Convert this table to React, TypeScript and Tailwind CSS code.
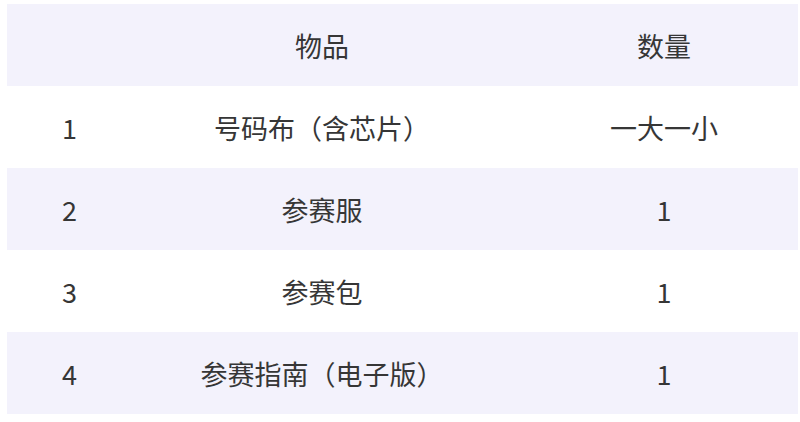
const rows = [
  { no: "1", item: "号码布（含芯片）", qty: "一大一小" },
  { no: "2", item: "参赛服", qty: "1" },
  { no: "3", item: "参赛包", qty: "1" },
  { no: "4", item: "参赛指南（电子版）", qty: "1" },
];

export default function App() {
  return (
    <div className="w-[800px] h-[422px] bg-white pt-[4px] pl-[7px] pr-[2px] font-['Noto_Sans_CJK_SC','Noto_Sans',sans-serif] text-[27px] leading-none text-[#363636]">
      <div className="grid grid-cols-[107px_416px_268px] h-[82px] items-center bg-[#f3f2fc]">
        <div />
        <div className="text-center">物品</div>
        <div className="text-center">数量</div>
      </div>
      {rows.map((r, i) => (
        <div
          key={r.no}
          className={
            "grid grid-cols-[107px_416px_268px] h-[82px] items-center " +
            (i % 2 === 0 ? "bg-white" : "bg-[#f3f2fc]")
          }
        >
          <div className="pl-[55px]">{r.no}</div>
          <div className="text-center">{r.item}</div>
          <div className="text-center">{r.qty}</div>
        </div>
      ))}
    </div>
  );
}
